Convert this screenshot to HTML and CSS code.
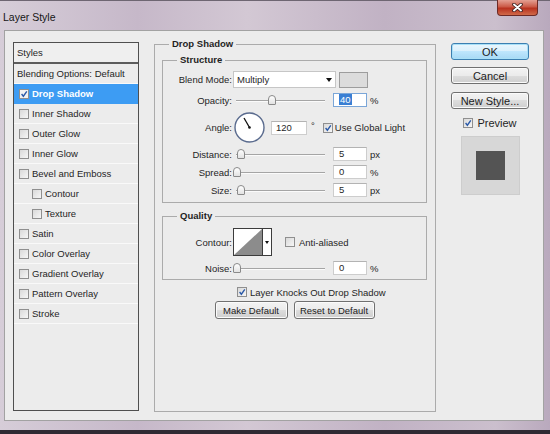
FILE: index.html
```html
<!DOCTYPE html>
<html>
<head>
    <title>Layer Style</title>
    <link rel="stylesheet" href="styles.css">
</head>
<body>
<div class="window">
    <div class="titlebar">
        <span class="title">Layer Style</span>
        <div class="close">
            <svg width="11" height="9" viewBox="0 0 11 9">
                <path d="M2 1.5 L9 7.5 M9 1.5 L2 7.5" stroke="#3a2020" stroke-width="3.6" stroke-linecap="round"/>
                <path d="M2 1.5 L9 7.5 M9 1.5 L2 7.5" stroke="#fff" stroke-width="1.9" stroke-linecap="round"/>
            </svg>
        </div>
    </div>

    <div class="content">
        <!-- left: list of effects -->
        <div class="style-list">
            <div class="list-head">Styles</div>
            <div class="item plain">Blending Options: Default</div>
            <div class="item selected"><span class="check on"><svg viewBox="0 0 10 10"><polyline points="2,5 4.2,7.8 8.5,1.6"/></svg></span>Drop Shadow</div>
            <div class="item"><span class="check"></span>Inner Shadow</div>
            <div class="item"><span class="check"></span>Outer Glow</div>
            <div class="item"><span class="check"></span>Inner Glow</div>
            <div class="item"><span class="check"></span>Bevel and Emboss</div>
            <div class="item sub"><span class="check"></span>Contour</div>
            <div class="item sub"><span class="check"></span>Texture</div>
            <div class="item"><span class="check"></span>Satin</div>
            <div class="item"><span class="check"></span>Color Overlay</div>
            <div class="item"><span class="check"></span>Gradient Overlay</div>
            <div class="item"><span class="check"></span>Pattern Overlay</div>
            <div class="item"><span class="check"></span>Stroke</div>
        </div>

        <!-- middle: settings -->
        <fieldset class="group main">
            <legend>Drop Shadow</legend>

            <fieldset class="group structure">
                <legend>Structure</legend>
                <div class="row blend">
                    <span class="lbl">Blend Mode:</span>
                    <div class="select">Multiply<span class="arrow"></span></div>
                    <div class="color"></div>
                </div>
                <div class="row gap5">
                    <span class="lbl">Opacity:</span>
                    <div class="slider"><span class="thumb" style="left: 35px"></span></div>
                    <div class="num focus"><span class="sel">40</span></div>
                    <span class="unit">%</span>
                </div>
                <div class="row gap5 angle">
                    <span class="lbl">Angle:</span>
                    <svg class="dial" width="31" height="31" viewBox="0 0 31 31">
                        <circle cx="15.5" cy="15.5" r="14.5" fill="#fff" stroke="#5a6b8e" stroke-width="1.4"/>
                        <line x1="15.5" y1="15.5" x2="10" y2="6" stroke="#111" stroke-width="1.3"/>
                        <circle cx="15.5" cy="15.5" r="1.3" fill="#111"/>
                    </svg>
                    <div class="num deg">120</div>
                    <span class="degree">°</span>
                    <span class="check on global"><svg viewBox="0 0 10 10"><polyline points="2,5 4.2,7.8 8.5,1.6"/></svg></span>
                    <span>Use Global Light</span>
                </div>
                <div class="row gap4">
                    <span class="lbl">Distance:</span>
                    <div class="slider"><span class="thumb" style="left: 4px"></span></div>
                    <div class="num">5</div>
                    <span class="unit">px</span>
                </div>
                <div class="row gap4">
                    <span class="lbl">Spread:</span>
                    <div class="slider"><span class="thumb" style="left: 0px"></span></div>
                    <div class="num">0</div>
                    <span class="unit">%</span>
                </div>
                <div class="row gap4">
                    <span class="lbl">Size:</span>
                    <div class="slider"><span class="thumb" style="left: 4px"></span></div>
                    <div class="num">5</div>
                    <span class="unit">px</span>
                </div>
            </fieldset>

            <fieldset class="group quality">
                <legend>Quality</legend>
                <div class="row contour-row">
                    <span class="lbl">Contour:</span>
                    <div class="contour">
                        <svg width="28" height="26" viewBox="0 0 28 26">
                            <polygon points="0,26 28,0 28,26" fill="#8c8c8c"/>
                        </svg>
                    </div>
                    <div class="contour-drop"><span class="arrow"></span></div>
                    <span class="check anti"></span>
                    <span>Anti-aliased</span>
                </div>
                <div class="row noise">
                    <span class="lbl">Noise:</span>
                    <div class="slider"><span class="thumb" style="left: 0px"></span></div>
                    <div class="num">0</div>
                    <span class="unit">%</span>
                </div>
            </fieldset>

            <div class="knock">
                <span class="check on"><svg viewBox="0 0 10 10"><polyline points="2,5 4.2,7.8 8.5,1.6"/></svg></span>
                <span>Layer Knocks Out Drop Shadow</span>
            </div>
            <div class="defaults">
                <button class="btn small">Make Default</button>
                <button class="btn small">Reset to Default</button>
            </div>
        </fieldset>

        <!-- right: actions -->
        <div class="side">
            <button class="btn ok">OK</button>
            <button class="btn">Cancel</button>
            <button class="btn">New Style...</button>
            <div class="preview-row">
                <span class="check on"><svg viewBox="0 0 10 10"><polyline points="2,5 4.2,7.8 8.5,1.6"/></svg></span>
                <span>Preview</span>
            </div>
            <div class="preview"><div class="preview-box"></div></div>
        </div>
    </div>
</div>
</body>
</html>
```

FILE: styles.css
```css
body {
    margin: 0;
    font-family: "Liberation Sans", Arial, sans-serif;
    font-size: 9.5px;
    color: #1f1f1f;
}

.window {
    width: 550px;
    height: 434px;
    box-sizing: border-box;
    display: flex;
    flex-direction: column;
    background: linear-gradient(to right, #d6cdd8, #c6b8c9 25%, #d3c8d4 45%, #c1b2c4 70%, #cbbfcd 90%, #b9a9bd);
    border-top: 1px solid #6e6672;
    border-bottom: 4px solid #2f2a33;
}

.titlebar {
    height: 29px;
    flex: none;
    display: flex;
    justify-content: space-between;
    align-items: flex-start;
    padding-left: 3px;
}

.title {
    font-size: 10.5px;
    color: #161616;
    margin-top: 10px;
}

.close {
    width: 41px;
    height: 16px;
    margin-right: 12px;
    margin-top: -1px;
    box-sizing: border-box;
    border: 1px solid #6d2a26;
    border-top: none;
    border-radius: 0 0 4px 4px;
    background: linear-gradient(#e4a093, #cb5a47 45%, #b8321f 55%, #d06a4a);
    display: flex;
    justify-content: center;
    align-items: center;
}

.content {
    height: 391px;
    flex: none;
    box-sizing: border-box;
    margin: 0 6px 0 4px;
    padding: 11px 0 0 8px;
    background: #ececec;
    border: 1px solid #a2a2a2;
    display: flex;
    align-items: flex-start;
}

/* styles list */

.style-list {
    width: 126px;
    height: 369px;
    flex: none;
    box-sizing: border-box;
    border: 1px solid #4f4f4f;
    background: #ececec;
}

.list-head {
    height: 21px;
    box-sizing: border-box;
    line-height: 19px;
    padding-left: 3px;
    border-bottom: 2px solid #5c5c5c;
    background: #efefef;
}

.item {
    height: 20px;
    box-sizing: border-box;
    display: flex;
    align-items: center;
    padding-left: 5px;
    border-bottom: 1px solid #f9f9f9;
}

.item.plain {
    padding-left: 3px;
}

.item.sub {
    padding-left: 18px;
}

.item.selected {
    background: #3d9cf3;
    color: #fff;
    font-weight: bold;
    border-bottom-color: #3d9cf3;
}

.check {
    width: 10px;
    height: 10px;
    flex: none;
    box-sizing: border-box;
    border: 1px solid #8f8f8f;
    background: linear-gradient(135deg, #d9d9d9, #f6f6f6);
    margin-right: 3px;
    display: inline-block;
}

.check svg {
    display: block;
    width: 8px;
    height: 8px;
}

.check svg polyline {
    fill: none;
    stroke: #2a59a8;
    stroke-width: 1.7;
}

.item.selected .check {
    background: #f2f2f2;
}

/* groups */

.group {
    margin: 0;
    padding: 0;
    min-width: 0;
    box-sizing: border-box;
    border: 1px solid #ababab;
}

.group legend {
    padding: 0 3px;
    font-weight: bold;
    line-height: 12px;
}

.main {
    width: 282px;
    height: 374px;
    flex: none;
    margin: -4px 0 0 15px;
    padding: 4px 8px 0 7px;
}

.main > legend {
    margin-left: 7px;
}

.structure {
    width: 265px;
    padding: 5px 0 5px 0;
    margin-bottom: 7px;
}

.structure > legend,
.quality > legend {
    margin-left: 14px;
}

.quality {
    width: 265px;
    padding: 6px 0 4px 0;
}

.row {
    display: flex;
    align-items: center;
    height: 14px;
}

.row.gap5 {
    margin-top: 5px;
}

.row.gap4 {
    margin-top: 4px;
}

.row.blend {
    height: 17px;
}

.row.angle {
    height: 31px;
}

.lbl {
    width: 69px;
    flex: none;
    text-align: right;
    margin-right: 1px;
}

.select {
    width: 103px;
    height: 17px;
    box-sizing: border-box;
    border: 1px solid #c6c6c6;
    background: #fff;
    display: flex;
    justify-content: space-between;
    align-items: center;
    padding: 0 3px 0 3px;
}

.arrow {
    width: 0;
    height: 0;
    border-left: 3px solid transparent;
    border-right: 3px solid transparent;
    border-top: 4px solid #111;
}

.color {
    width: 29px;
    height: 16px;
    box-sizing: border-box;
    margin-left: 3px;
    border: 1px solid #9d9d9d;
    background: #dcdcdc;
}

.slider {
    position: relative;
    width: 92px;
    height: 12px;
    flex: none;
}

.slider::before {
    content: '';
    position: absolute;
    left: 3px;
    right: 0;
    top: 6px;
    height: 1px;
    background: #a5a5a5;
    box-shadow: 0 1px 0 #fbfbfb;
}

.thumb {
    position: absolute;
    top: 1px;
    width: 8px;
    height: 10px;
    box-sizing: border-box;
    border: 1px solid #8a8a8a;
    border-radius: 4px 4px 1px 1px;
    background: linear-gradient(#ffffff, #e2e2e2);
}

.num {
    width: 34px;
    height: 14px;
    flex: none;
    box-sizing: border-box;
    margin-left: 8px;
    border: 1px solid #cdcdcd;
    border-top-color: #b3b3b3;
    background: #fff;
    padding-left: 5px;
    line-height: 12px;
}

.num.focus {
    border-color: #7aa6d8;
}

.sel {
    background: #3a7fd3;
    color: #fff;
    padding: 0 1px;
}

.unit {
    margin-left: 3px;
}

.dial {
    margin-left: 1px;
    flex: none;
}

.num.deg {
    width: 36px;
    margin-left: 6px;
    padding-left: 4px;
}

.degree {
    margin-left: 4px;
    align-self: flex-start;
    margin-top: 8px;
}

.check.global {
    margin-left: 8px;
    margin-right: 2px;
}

.row.contour-row {
    height: 28px;
}

.contour {
    width: 30px;
    height: 28px;
    box-sizing: border-box;
    border: 1px solid #3c3c3c;
    background: #fff;
}

.contour svg {
    display: block;
}

.contour-drop {
    width: 9px;
    height: 28px;
    box-sizing: border-box;
    border: 1px solid #3c3c3c;
    border-left: none;
    background: #fff;
    display: flex;
    align-items: center;
    justify-content: center;
}

.contour-drop .arrow {
    border-left-width: 2px;
    border-right-width: 2px;
    border-top-width: 3px;
}

.check.anti {
    margin-left: 13px;
    margin-right: 4px;
}

.row.noise {
    margin-top: 5px;
}

.knock {
    display: flex;
    align-items: center;
    height: 12px;
    margin: 6px 0 0 75px;
}

.defaults {
    display: flex;
    justify-content: center;
    gap: 6px;
    margin-top: 3px;
}

/* buttons */

.btn {
    height: 17px;
    width: 78px;
    padding: 0;
    box-sizing: border-box;
    font-family: "Liberation Sans", Arial, sans-serif;
    font-size: 11px;
    color: #1c1c1c;
    border: 1px solid #707070;
    border-radius: 3px;
    background: linear-gradient(#f3f3f3, #ebebeb 50%, #dddddd 50%, #cfcfcf);
    box-shadow: inset 0 0 0 1px #fbfbfb;
}

.btn.small {
    height: 18px;
    font-size: 9.5px;
}

.btn.small:first-child {
    width: 73px;
}

.btn.small:last-child {
    width: 81px;
}

.btn.ok {
    border-color: #3c7fb1;
    background: linear-gradient(#eaf6fd, #d9f0fc 50%, #bee6fd 50%, #a7d9f5);
    box-shadow: inset 0 0 0 1px #a9e0f7;
}

.side {
    width: 78px;
    flex: none;
    margin: 1px 0 0 15px;
    display: flex;
    flex-direction: column;
    align-items: center;
}

.side .btn + .btn {
    margin-top: 7px;
}

.side .btn:nth-child(3) {
    margin-top: 8px;
}

.preview-row {
    display: flex;
    align-items: center;
    height: 12px;
    margin-top: 8px;
    font-size: 11px;
}

.preview-row .check {
    margin-right: 4px;
}

.preview {
    width: 59px;
    height: 59px;
    box-sizing: border-box;
    margin-top: 7px;
    border: 1px solid #cdcdcd;
    background: #d7d7d7;
    display: flex;
    align-items: center;
    justify-content: center;
}

.preview-box {
    width: 29px;
    height: 29px;
    background: #545454;
}
```
